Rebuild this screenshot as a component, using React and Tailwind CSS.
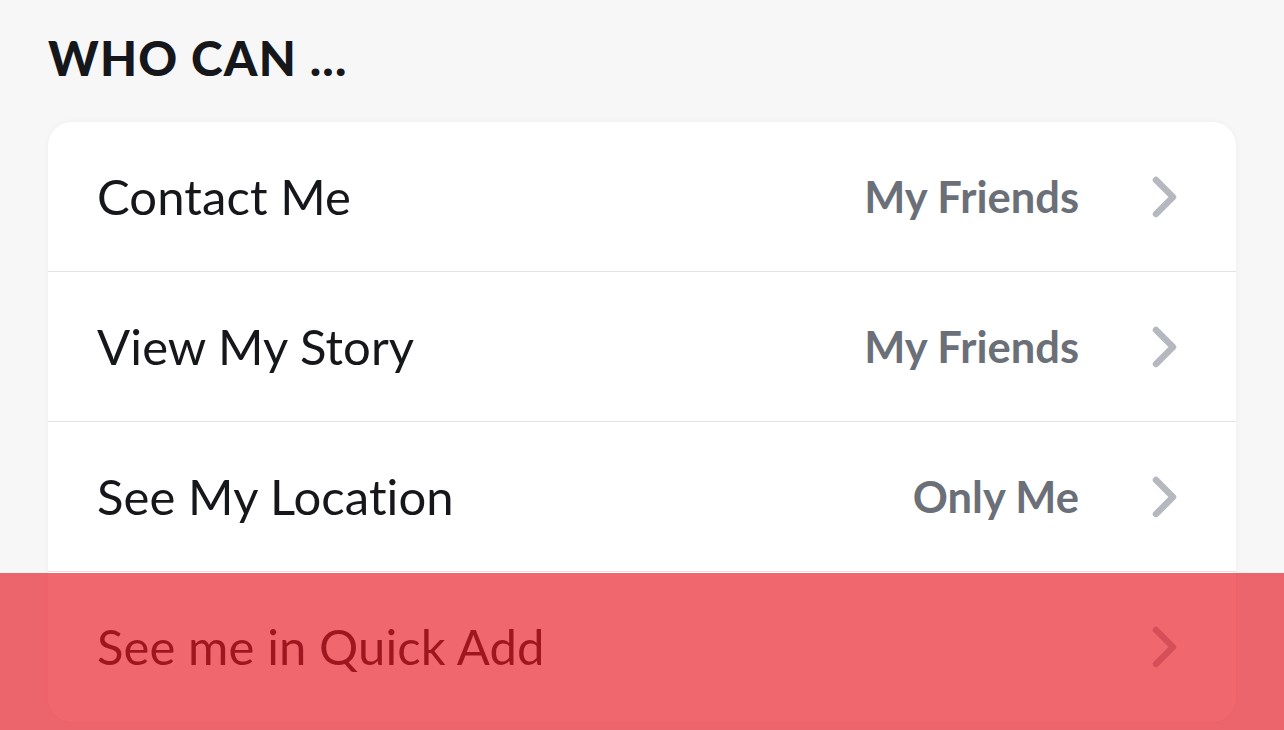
import React from "react";

const rows = [
  { label: "Contact Me", value: "My Friends" },
  { label: "View My Story", value: "My Friends" },
  { label: "See My Location", value: "Only Me" },
  { label: "See me in Quick Add", value: "" },
];

function Chevron() {
  return (
    <svg width="34" height="46" viewBox="0 0 34 46" className="shrink-0">
      <path
        d="M9 6 L26 23 L9 40"
        fill="none"
        stroke="#b5b8bf"
        strokeWidth="6.5"
        strokeLinecap="round"
        strokeLinejoin="round"
      />
    </svg>
  );
}

export default function App() {
  return (
    <div
      className="relative w-full h-[730px] overflow-hidden bg-[#f7f7f8]"
      style={{ fontFamily: "Lato, 'Open Sans', sans-serif" }}
    >
      <div className="pl-[48px] pt-[31px] pb-[38px]">
        <h1 className="text-[48px] leading-[53px] font-black tracking-[1.2px] text-[#16171b]">
          WHO CAN ...
        </h1>
      </div>
      <div className="mx-[48px] rounded-[24px] bg-white shadow-[0_0_6px_rgba(0,0,0,0.04)] overflow-hidden">
        {rows.map((r, i) => (
          <div
            key={r.label}
            className={
              "flex items-center h-[150px] pl-[49px] pr-[55px] " +
              (i < rows.length - 1 ? "border-b border-[#e3e3e6]" : "")
            }
          >
            <span className="flex-1 text-[49px] text-[#16171b] tracking-[0.1px]">
              {r.label}
            </span>
            <span className="text-[43.5px] font-bold text-[#6b6f78] mr-[68px]">
              {r.value}
            </span>
            <Chevron />
          </div>
        ))}
      </div>
      <div className="absolute left-0 right-0 top-[573px] bottom-0 bg-[rgba(232,23,32,0.65)]" />
    </div>
  );
}
